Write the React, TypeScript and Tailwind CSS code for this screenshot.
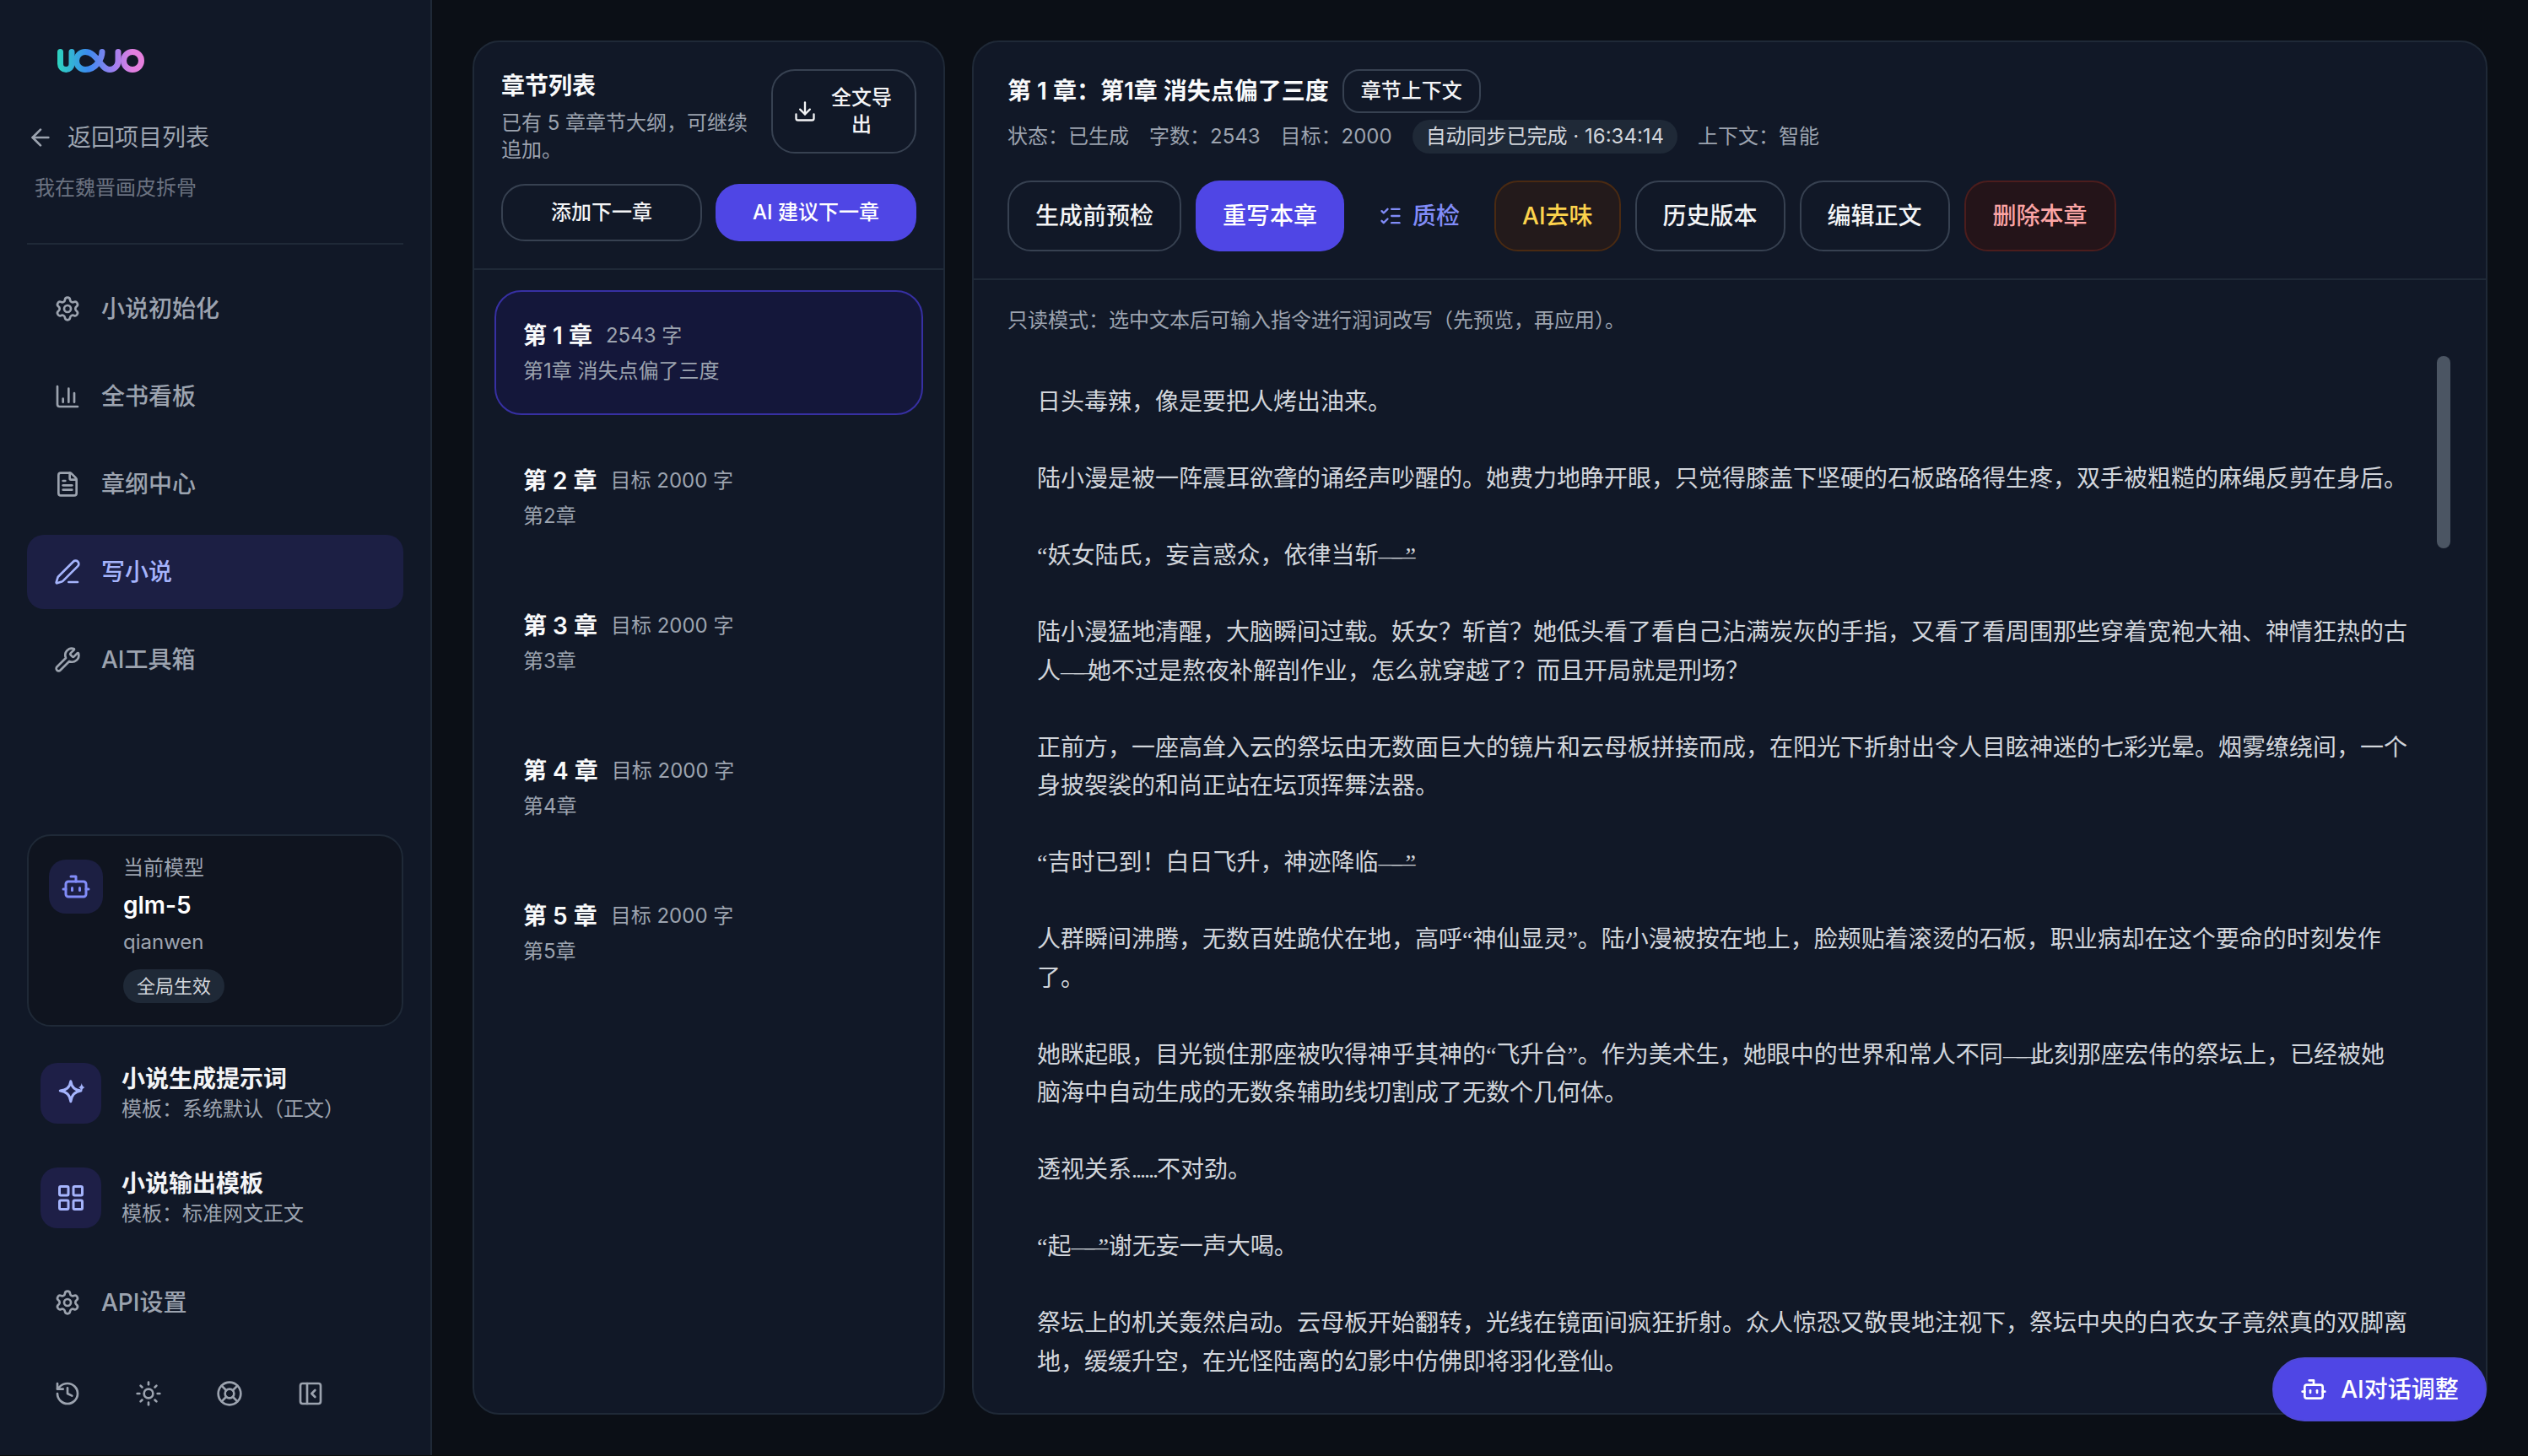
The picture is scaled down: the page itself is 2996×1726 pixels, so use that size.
import React from "react";
import {
  ArrowLeft,
  Bot,
  ChartColumn,
  Download,
  FileText,
  History,
  LayoutGrid,
  LifeBuoy,
  ListChecks,
  PanelLeftClose,
  PenLine,
  Settings,
  Sun,
  Wrench,
} from "lucide-react";

const navItems = [
  { label: "小说初始化", icon: Settings },
  { label: "全书看板", icon: ChartColumn },
  { label: "章纲中心", icon: FileText },
  { label: "写小说", icon: PenLine, active: true },
  { label: "AI工具箱", icon: Wrench },
];

const chapters = [
  { no: "第 1 章", meta: "2543 字", title: "第1章 消失点偏了三度", active: true },
  { no: "第 2 章", meta: "目标 2000 字", title: "第2章" },
  { no: "第 3 章", meta: "目标 2000 字", title: "第3章" },
  { no: "第 4 章", meta: "目标 2000 字", title: "第4章" },
  { no: "第 5 章", meta: "目标 2000 字", title: "第5章" },
];

const body = `日头毒辣，像是要把人烤出油来。

陆小漫是被一阵震耳欲聋的诵经声吵醒的。她费力地睁开眼，只觉得膝盖下坚硬的石板路硌得生疼，双手被粗糙的麻绳反剪在身后。

“妖女陆氏，妄言惑众，依律当斩——”

陆小漫猛地清醒，大脑瞬间过载。妖女？斩首？她低头看了看自己沾满炭灰的手指，又看了看周围那些穿着宽袍大袖、神情狂热的古人——她不过是熬夜补解剖作业，怎么就穿越了？而且开局就是刑场？

正前方，一座高耸入云的祭坛由无数面巨大的镜片和云母板拼接而成，在阳光下折射出令人目眩神迷的七彩光晕。烟雾缭绕间，一个身披袈裟的和尚正站在坛顶挥舞法器。

“吉时已到！白日飞升，神迹降临——”

人群瞬间沸腾，无数百姓跪伏在地，高呼“神仙显灵”。陆小漫被按在地上，脸颊贴着滚烫的石板，职业病却在这个要命的时刻发作了。

她眯起眼，目光锁住那座被吹得神乎其神的“飞升台”。作为美术生，她眼中的世界和常人不同——此刻那座宏伟的祭坛上，已经被她脑海中自动生成的无数条辅助线切割成了无数个几何体。

透视关系......不对劲。

“起——”谢无妄一声大喝。

祭坛上的机关轰然启动。云母板开始翻转，光线在镜面间疯狂折射。众人惊恐又敬畏地注视下，祭坛中央的白衣女子竟然真的双脚离地，缓缓升空，在光怪陆离的幻影中仿佛即将羽化登仙。`;

const outlineBtn =
  "h-[84px] px-[31px] rounded-[28px] border-2 border-[#374151] text-[28px] font-medium text-[#f3f4f6] flex items-center shrink-0";

// 破折号和省略号在参考图里是窄的
const renderBody = (text: string) =>
  text.split(/(——|\.\.\.\.\.\.)/).map((part, i) => {
    if (part === "——") return <span key={i} className="tracking-[-12px]">{part}</span>;
    if (part === "......") return <span key={i} className="tracking-[-2px]">{part}</span>;
    return <React.Fragment key={i}>{part}</React.Fragment>;
  });

const Logo = () => (
  <svg width="104" height="28" viewBox="0 0 104 28" fill="none">
    <defs>
      <linearGradient id="logoGrad" gradientUnits="userSpaceOnUse" x1="0" y1="0" x2="104" y2="0">
        <stop offset="0" stopColor="#2dd4bf" />
        <stop offset="0.35" stopColor="#3b8bf0" />
        <stop offset="0.65" stopColor="#a07ff0" />
        <stop offset="0.85" stopColor="#e07fe0" />
        <stop offset="1" stopColor="#e87fdc" />
      </linearGradient>
    </defs>
    <g stroke="url(#logoGrad)" strokeWidth="7" strokeLinecap="round">
      <path d="M3.5 3.5V17.75A6.75 6.75 0 0 0 17 17.75V3.5" />
      <path d="M53 3.5C53 10 47 24.5 33 24.5A10.5 10.5 0 0 1 33 3.5C47 3.5 51 24.5 62 24.5A10 10 0 0 0 72 14.5V3.5" />
      <circle cx="89" cy="14" r="10.5" />
    </g>
  </svg>
);

const StarIcon = () => (
  <svg width="36" height="36" viewBox="0 0 24 24" fill="none" stroke="currentColor" strokeWidth="2" strokeLinejoin="round">
    <path d="M11.9 2.5C12.5 7 15 9.6 20 10C15 10.6 12.5 13.5 11.9 18.5C11.3 13.5 8.5 10.6 3.5 10C8.5 9.6 11.3 7 11.9 2.5Z" />
    <path
      d="M20.5 4C20.8 6 21.8 7 23 7.3C21.8 7.7 20.8 8.7 20.5 11C20.2 8.7 19.2 7.7 18 7.3C19.2 7 20.2 6 20.5 4Z"
      fill="currentColor"
      stroke="none"
    />
  </svg>
);

export default function App() {
  return (
    <div className="relative w-[2996px] h-[1726px] overflow-hidden flex flex-col bg-[#0b0f16] font-['Inter','Noto_Sans_CJK_SC',sans-serif]">
      <div className="flex flex-1 min-h-0">
        {/* 侧边栏 */}
        <aside className="w-[512px] shrink-0 bg-[#111827] border-r-2 border-[#1f2937] flex flex-col pb-[57px]">
          <div className="px-8">
            <div className="pl-9 pt-[58px] h-[86px]">
              <Logo />
            </div>
            <div className="mt-[61px] flex items-center gap-4 text-[#9ca3af]">
              <ArrowLeft size={32} />
              <span className="text-[28px] leading-[32px]">返回项目列表</span>
            </div>
            <div className="mt-[28px] pl-[9px] text-[24px] leading-[32px] text-[#6b7280]">我在魏晋画皮拆骨</div>
            <div className="mt-[49px] h-[2px] bg-[#1f2937]" />
          </div>

          <nav className="mt-[32px] px-8 flex flex-col gap-4">
            {navItems.map((item) => (
              <div
                key={item.label}
                className={`h-[88px] px-8 rounded-[20px] flex items-center gap-6 text-[28px] font-medium ${
                  item.active ? "bg-[#1c1f44] text-[#a5b4fc]" : "text-[#9ca3af]"
                }`}
              >
                <item.icon size={32} />
                <span>{item.label}</span>
              </div>
            ))}
          </nav>

          <div className="mt-auto mx-8 rounded-[28px] border-2 border-[#1f2937] bg-[#0f141f] px-6 pt-[22px] pb-[26px] flex gap-6">
            <div className="mt-[6px] w-16 h-16 rounded-[20px] bg-[#1c1f42] flex items-center justify-center text-[#818cf8] shrink-0">
              <Bot size={36} />
            </div>
            <div className="flex flex-col items-start">
              <div className="text-[24px] leading-[32px] text-[#9ca3af]">当前模型</div>
              <div className="mt-2 text-[28px] leading-[40px] font-semibold text-white">glm-5</div>
              <div className="mt-2 text-[24px] leading-[32px] text-[#9ca3af]">qianwen</div>
              <div className="mt-4 h-10 px-4 rounded-full bg-[#1f2937] text-[22px] flex items-center text-[#d1d5db]">全局生效</div>
            </div>
          </div>

          <div className="mt-[43px] pl-12 flex flex-col gap-[52px]">
            <div className="flex items-center gap-6">
              <div className="w-[72px] h-[72px] rounded-[20px] bg-[#1e1f47] flex items-center justify-center text-[#a5b4fc]">
                <StarIcon />
              </div>
              <div>
                <div className="text-[28px] leading-[36px] font-semibold text-[#f3f4f6]">小说生成提示词</div>
                <div className="mt-[2px] text-[24px] leading-[32px] text-[#9ca3af]">模板：系统默认（正文）</div>
              </div>
            </div>
            <div className="flex items-center gap-6">
              <div className="w-[72px] h-[72px] rounded-[20px] bg-[#1e1f47] flex items-center justify-center text-[#a5b4fc]">
                <LayoutGrid size={36} />
              </div>
              <div>
                <div className="text-[28px] leading-[36px] font-semibold text-[#f3f4f6]">小说输出模板</div>
                <div className="mt-[2px] text-[24px] leading-[32px] text-[#9ca3af]">模板：标准网文正文</div>
              </div>
            </div>
          </div>

          <div className="mt-[44px] mx-8 h-[88px] px-8 flex items-center gap-6 text-[28px] font-medium text-[#9ca3af]">
            <Settings size={32} />
            <span>API设置</span>
          </div>

          <div className="mt-[48px] pl-16 flex items-center gap-16 text-[#9ca3af]">
            <History size={32} />
            <Sun size={32} />
            <LifeBuoy size={32} />
            <PanelLeftClose size={32} />
          </div>
        </aside>

        <main className="flex-1 min-w-0 pt-12 pb-12 pl-12 pr-12 flex gap-8">
          {/* 章节列表 */}
          <section className="w-[560px] shrink-0 rounded-[32px] border-2 border-[#1f2937] bg-[#111827] flex flex-col overflow-hidden">
            <div className="px-8 pt-8 pb-8 border-b-2 border-[#1f2937]">
              <div className="flex justify-between gap-4">
                <div className="min-w-0">
                  <div className="text-[28px] leading-[40px] font-semibold text-[#f9fafb]">章节列表</div>
                  <div className="mt-2 text-[24px] leading-[32px] text-[#9ca3af]">已有 5 章章节大纲，可继续追加。</div>
                </div>
                <button className="w-[172px] h-[100px] shrink-0 rounded-[28px] border-2 border-[#374151] pl-[24px] pr-[26px] flex items-center gap-4 text-[24px] leading-[32px] font-medium text-[#f3f4f6]">
                  <Download size={28} className="shrink-0" />
                  <span>全文导出</span>
                </button>
              </div>
              <div className="mt-6 grid grid-cols-2 gap-4">
                <button className="h-[68px] rounded-[28px] border-2 border-[#374151] text-[24px] font-medium text-[#f3f4f6]">添加下一章</button>
                <button className="h-[68px] rounded-[28px] bg-[#4f46e5] text-[24px] font-medium text-white">AI 建议下一章</button>
              </div>
            </div>
            <div className="flex-1 p-6 flex flex-col gap-6">
              {chapters.map((c) => (
                <div
                  key={c.no}
                  className={`h-[148px] rounded-[32px] border-2 px-8 pt-8 ${
                    c.active ? "border-[#3730a3] bg-[#14173a]" : "border-transparent"
                  }`}
                >
                  <div className="flex items-center gap-4">
                    <span className="text-[28px] leading-[40px] font-semibold text-[#f9fafb]">{c.no}</span>
                    <span className="text-[24px] leading-[40px] text-[#9ca3af]">{c.meta}</span>
                  </div>
                  <div className="mt-[6px] text-[24px] leading-[32px] text-[#9ca3af]">{c.title}</div>
                </div>
              ))}
            </div>
          </section>

          {/* 正文 */}
          <section className="relative flex-1 min-w-0 rounded-[32px] border-2 border-[#1f2937] bg-[#111827] flex flex-col overflow-hidden">
            <div className="px-10 pt-8 pb-8 border-b-2 border-[#1f2937]">
              <div className="flex items-center gap-4">
                <div className="text-[28px] font-semibold text-[#f9fafb]">第 1 章：第1章 消失点偏了三度</div>
                <button className="h-[52px] px-[20px] rounded-[20px] border-2 border-[#374151] text-[24px] font-medium text-[#f3f4f6]">章节上下文</button>
              </div>
              <div className="mt-2 flex items-center gap-6 text-[24px] text-[#9ca3af]">
                <span>状态：已生成</span>
                <span>字数：2543</span>
                <span>目标：2000</span>
                <span className="h-10 px-4 rounded-full bg-[#1f2937] flex items-center text-[#d1d5db]">自动同步已完成 · 16:34:14</span>
                <span>上下文：智能</span>
              </div>
              <div className="mt-8 flex items-center gap-[17px]">
                <button className={outlineBtn}>生成前预检</button>
                <button className="h-[84px] px-[32px] rounded-[28px] bg-[#4f46e5] text-[28px] font-medium text-white">重写本章</button>
                <button className="h-[84px] px-6 rounded-[28px] flex items-center gap-3 text-[28px] font-medium text-[#818cf8]">
                  <ListChecks size={28} />
                  <span>质检</span>
                </button>
                <button className="h-[84px] px-[31px] rounded-[28px] border-2 border-[#4a2a12] bg-[#231a1b] text-[28px] font-medium text-[#fcd34d]">AI去味</button>
                <button className={outlineBtn}>历史版本</button>
                <button className={outlineBtn}>编辑正文</button>
                <button className="h-[84px] px-[32px] rounded-[28px] border-2 border-[#4c1d1d] bg-[#241419] text-[28px] font-medium text-[#fca5a5]">删除本章</button>
              </div>
            </div>
            <div className="flex-1 min-h-0 pl-10 pt-8 overflow-hidden">
              <div className="text-[24px] leading-[32px] text-[#9ca3af]">只读模式：选中文本后可输入指令进行润词改写（先预览，再应用）。</div>
              <div className="mt-[58px] ml-[35px] w-[1624px] whitespace-pre-wrap text-[28px] leading-[45.5px] text-[#d1d5db] font-['Liberation_Serif','Noto_Sans_CJK_SC',serif]">
                {renderBody(body)}
              </div>
            </div>
            <div className="absolute left-[1734px] top-[372px] w-4 h-[228px] rounded-full bg-[#4b5563]" />
          </section>
        </main>
      </div>
      <div className="h-px shrink-0 bg-[#0a0d0a]" />

      <button className="absolute right-[49px] bottom-[41px] h-[76px] w-[254px] rounded-full border-2 border-[#4f49d8] bg-[#4f46e5] flex items-center justify-center gap-4 text-[28px] font-medium text-white">
        <Bot size={32} />
        <span>AI对话调整</span>
      </button>
    </div>
  );
}
